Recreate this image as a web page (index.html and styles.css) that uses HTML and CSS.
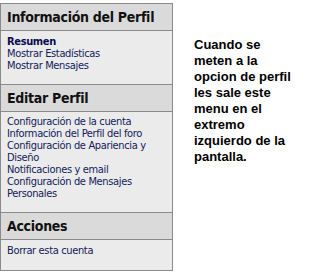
FILE: index.html
```html
<!DOCTYPE html>
<html>
<head>
<meta charset="utf-8">
<link rel="stylesheet" href="styles.css">
</head>
<body>
<div class="page">
  <div class="panel">
    <div class="section">
      <div class="head">Información del Perfil</div>
      <div class="body b1">
        <a class="link strong">Resumen</a>
        <a class="link">Mostrar Estadísticas</a>
        <a class="link">Mostrar Mensajes</a>
      </div>
    </div>
    <div class="section">
      <div class="head">Editar Perfil</div>
      <div class="body b2">
        <a class="link">Configuración de la cuenta</a>
        <a class="link">Información del Perfil del foro</a>
        <a class="link">Configuración de Apariencia y Diseño</a>
        <a class="link">Notificaciones y email</a>
        <a class="link">Configuración de Mensajes Personales</a>
      </div>
    </div>
    <div class="section">
      <div class="head">Acciones</div>
      <div class="body b3">
        <a class="link">Borrar esta cuenta</a>
      </div>
    </div>
  </div>
  <div class="note">Cuando se<br>meten a la<br>opcion de perfil<br>les sale este<br>menu en el<br>extremo<br>izquierdo de la<br>pantalla.</div>
</div>
</body>
</html>
```

FILE: styles.css
```css
html, body {
  margin: 0;
  padding: 0;
  background: #ffffff;
}
.page {
  display: flex;
  align-items: flex-start;
  width: 322px;
  height: 275px;
  overflow: hidden;
}
.panel {
  margin-top: 3px;
  width: 171px;
  border: 1px solid #8a8a8a;
  background: #ebebeb;
  font-family: "DejaVu Sans Condensed", "DejaVu Sans", sans-serif;
}
.section + .section {
  border-top: 1px solid #8a8a8a;
}
.head {
  height: 26px;
  line-height: 26px;
  padding: 0 6px;
  background: #dadada;
  border-bottom: 1px solid #8a8a8a;
  font-size: 14px;
  letter-spacing: -0.3px;
  font-weight: bold;
  color: #111111;
  white-space: nowrap;
}
.body {
  box-sizing: border-box;
  padding: 5px 6px 0 6px;
  font-size: 11px;
  letter-spacing: -0.35px;
  line-height: 12px;
}
.b1 { height: 53px; }
.b2 { height: 100px; padding-top: 4px; }
.b3 { height: 30px; padding-top: 5px; }
.link {
  display: block;
  color: #12205a;
  text-decoration: none;
}
.link.strong {
  font-weight: bold;
  color: #0a0a4e;
}
.note {
  margin-left: 21px;
  margin-top: 37px;
  font-family: "Liberation Sans", Arial, sans-serif;
  font-size: 13px;
  font-weight: bold;
  line-height: 16px;
  color: #000000;
  white-space: nowrap;
}
```
